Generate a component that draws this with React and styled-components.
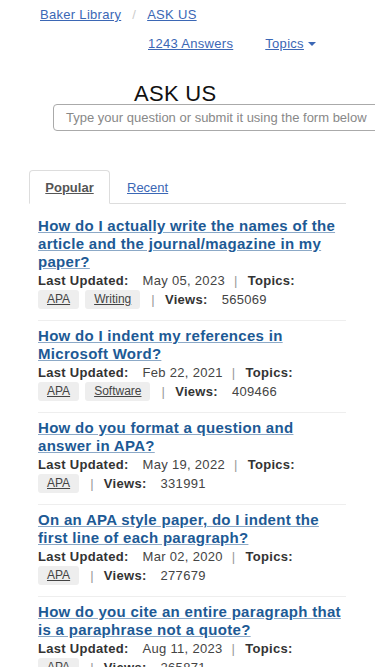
import React from "react";
import styled, { createGlobalStyle } from "styled-components";

const Global = createGlobalStyle`
  html, body { margin: 0; padding: 0; background: #fff; overflow-x: hidden; }
  body { font-family: "Liberation Sans", Arial, sans-serif; color: #333; letter-spacing: 0.3px; }
`;

const Page = styled.div`
  width: 375px;
`;

const Breadcrumb = styled.div`
  display: flex;
  align-items: center;
  padding: 6px 0 0 40px;
  height: 17px;
  font-size: 13px;
`;

const Crumb = styled.a`
  color: #3b67b5;
  text-decoration: underline;
`;

const Slash = styled.span`
  color: #ccc;
  margin: 0 11px 0 11px;
`;

const NavRow = styled.div`
  display: flex;
  align-items: center;
  gap: 32px;
  padding: 12px 0 0 148px;
  height: 17px;
  font-size: 13px;
`;

const NavLink = styled.a`
  color: #3b67b5;
  text-decoration: underline;
  display: inline-flex;
  align-items: center;
`;

const Caret = styled.span`
  display: inline-block;
  margin-left: 4px;
  border-left: 4px solid transparent;
  border-right: 4px solid transparent;
  border-top: 4px solid #3b67b5;
`;

const Heading = styled.h1`
  margin: 29px 0 0 134px;
  font-size: 22px;
  font-weight: normal;
  color: #111;
  line-height: 26px;
  height: 23px;
`;

const Search = styled.div`
  margin: 0 0 0 53px;
  width: 340px;
  height: 25px;
  border: 1px solid #aaa;
  border-radius: 4px;
  display: flex;
  align-items: center;
  padding-left: 12px;
  box-sizing: content-box;
  font-size: 13px;
  letter-spacing: 0;
  color: #888;
  white-space: nowrap;
`;

const Panel = styled.div`
  margin: 39px 0 0 29px;
  width: 317px;
`;

const Tabs = styled.div`
  display: flex;
  align-items: flex-end;
  border-bottom: 1px solid #ddd;
  height: 33px;
`;

const Tab = styled.a`
  display: flex;
  align-items: center;
  justify-content: center;
  height: 33px;
  box-sizing: border-box;
  padding: 0 ${(p) => (p.$active ? "15px" : "17px")};
  margin-bottom: -1px;
  font-size: 13px;
  letter-spacing: 0;
  text-decoration: underline;
  ${(p) =>
    p.$active
      ? `
    width: 81px;
    border: 1px solid #ddd;
    border-bottom-color: #fff;
    border-radius: 4px 4px 0 0;
    background: #fff;
    color: #555;
    font-weight: bold;
    height: 34px;
  `
      : `
    color: #3b67b5;
  `}
`;

const List = styled.div`
  padding: 7px 0 0 9px;
`;

const Item = styled.div`
  padding: 6px 0 11px;
  border-bottom: 1px solid #eee;
`;

const Title = styled.a`
  display: block;
  color: #1d5a95;
  font-size: 15px;
  font-weight: bold;
  line-height: 18px;
  text-decoration: underline;
  text-decoration-color: #8ca9c7;
`;

const Meta = styled.div`
  display: flex;
  align-items: center;
  font-size: 13px;
  height: 18px;
`;

const TagRow = styled(Meta)`
  height: 20px;
`;

const Label = styled.b`
  color: #333;
  margin-right: ${(p) => (p.$last ? "0" : "14px")};
`;

const Value = styled.span`
  color: #444;
`;

const Pipe = styled.span`
  color: #999;
  margin: 0 10px 0 ${(p) => p.$left || "9px"};
`;

const Tags = styled.span`
  display: inline-flex;
  gap: 6px;
`;

const Tag = styled.a`
  display: inline-flex;
  align-items: center;
  height: 19px;
  padding: 0 9px;
  background: #eee;
  border-radius: 3px;
  font-size: 12px;
  letter-spacing: 0;
  color: #444;
  text-decoration: underline;
`;

const items = [
  {
    title: "How do I actually write the names of the article and the journal/magazine in my paper?",
    date: "May 05, 2023",
    tags: ["APA", "Writing"],
    views: "565069",
  },
  {
    title: "How do I indent my references in Microsoft Word?",
    date: "Feb 22, 2021",
    tags: ["APA", "Software"],
    views: "409466",
  },
  {
    title: "How do you format a question and answer in APA?",
    date: "May 19, 2022",
    tags: ["APA"],
    views: "331991",
  },
  {
    title: "On an APA style paper, do I indent the first line of each paragraph?",
    date: "Mar 02, 2020",
    tags: ["APA"],
    views: "277679",
  },
  {
    title: "How do you cite an entire paragraph that is a paraphrase not a quote?",
    date: "Aug 11, 2023",
    tags: ["APA"],
    views: "265871",
  },
];

export default function App() {
  return (
    <Page>
      <Global />
      <Breadcrumb>
        <Crumb href="#">Baker Library</Crumb>
        <Slash>/</Slash>
        <Crumb href="#">ASK US</Crumb>
      </Breadcrumb>
      <NavRow>
        <NavLink href="#">1243 Answers</NavLink>
        <NavLink href="#">
          Topics <Caret />
        </NavLink>
      </NavRow>
      <Heading>ASK US</Heading>
      <Search>Type your question or submit it using the form below</Search>
      <Panel>
        <Tabs>
          <Tab $active href="#">Popular</Tab>
          <Tab href="#">Recent</Tab>
        </Tabs>
        <List>
          {items.map((it) => (
            <Item key={it.title}>
              <Title href="#">{it.title}</Title>
              <Meta>
                <Label>Last Updated:</Label>
                <Value>{it.date}</Value>
                <Pipe>|</Pipe>
                <Label $last>Topics:</Label>
              </Meta>
              <TagRow>
                <Tags>
                  {it.tags.map((t) => (
                    <Tag key={t} href="#">{t}</Tag>
                  ))}
                </Tags>
                <Pipe $left="11px">|</Pipe>
                <Label>Views:</Label>
                <Value>{it.views}</Value>
              </TagRow>
            </Item>
          ))}
        </List>
      </Panel>
    </Page>
  );
}
